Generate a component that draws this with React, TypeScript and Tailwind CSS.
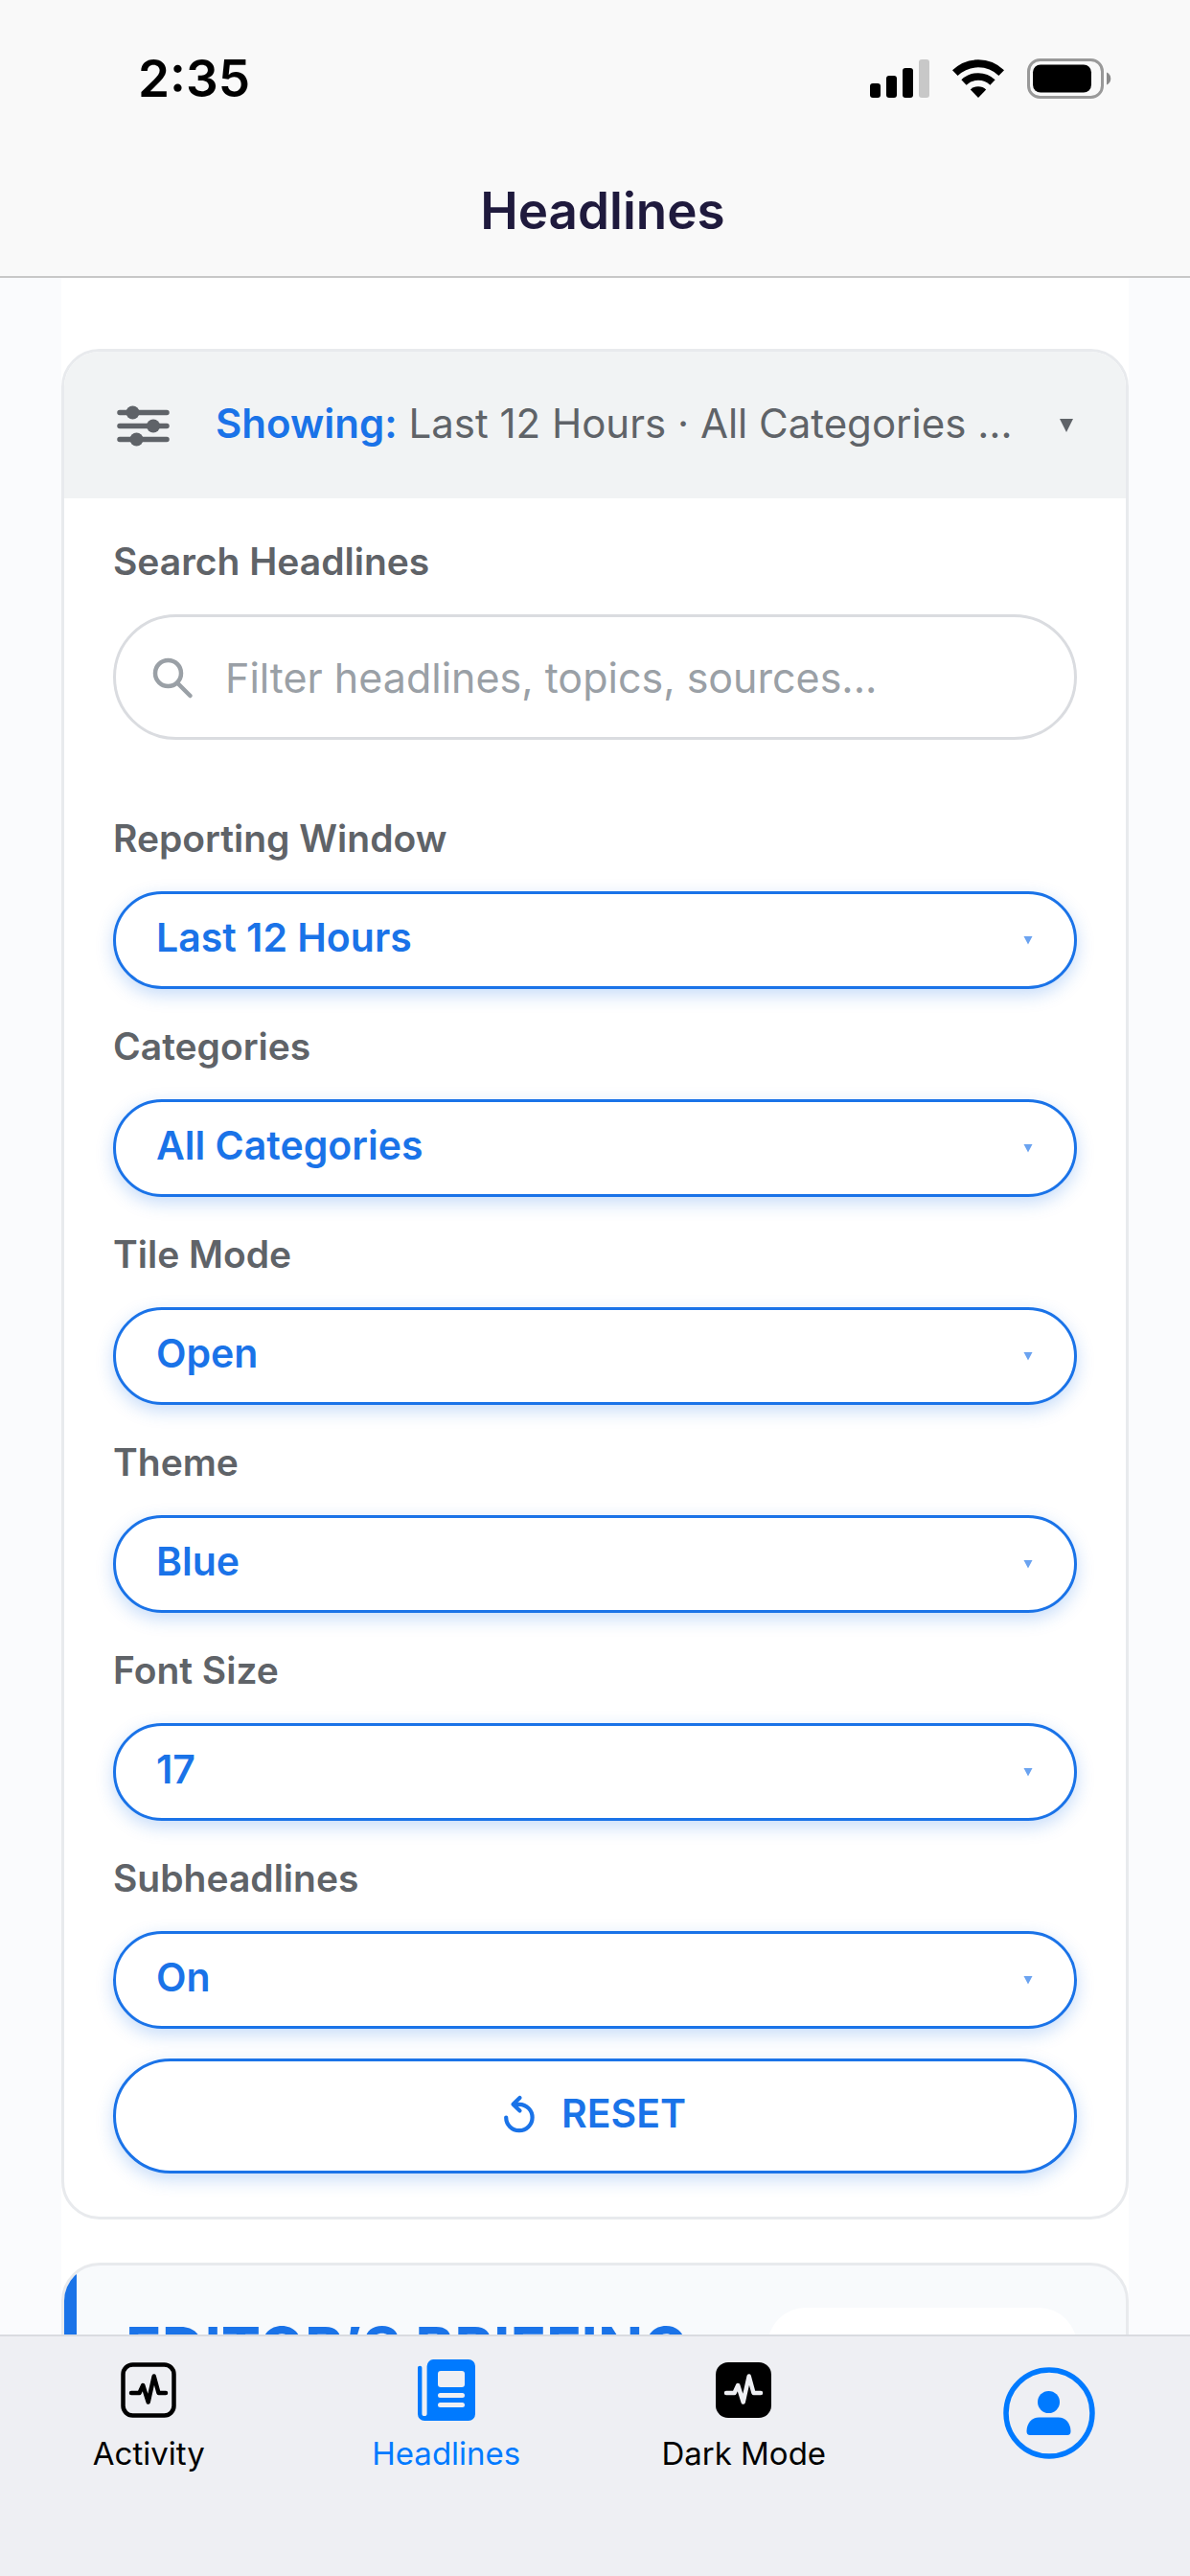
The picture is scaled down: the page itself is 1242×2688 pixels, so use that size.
import React, { useState } from 'react';

interface FilterField {
  id: string;
  label: string;
  options: string[];
}

const FILTERS: FilterField[] = [
  { id: 'window', label: 'Reporting Window', options: ['Last 12 Hours', 'Last 24 Hours', 'Last 48 Hours'] },
  { id: 'categories', label: 'Categories', options: ['All Categories', 'World', 'Business', 'Technology'] },
  { id: 'tile-mode', label: 'Tile Mode', options: ['Open', 'Closed'] },
  { id: 'theme', label: 'Theme', options: ['Blue', 'Green', 'Gray'] },
  { id: 'font-size', label: 'Font Size', options: ['17', '15', '19'] },
  { id: 'subheadlines', label: 'Subheadlines', options: ['On', 'Off'] },
];

const DEFAULTS: Record<string, string> = Object.fromEntries(FILTERS.map((f) => [f.id, f.options[0]]));

function SignalIcon() {
  return (
    <svg className="w-[62px] h-10" viewBox="0 0 62 40" aria-hidden="true">
      <rect x="0" y="25" width="11" height="15" rx="3" />
      <rect x="17" y="17" width="11" height="23" rx="3" />
      <rect x="34" y="9" width="11" height="31" rx="3" />
      <rect x="51" y="0" width="11" height="40" rx="3" fill="#c8c8c8" />
    </svg>
  );
}

function WifiIcon() {
  return (
    <svg className="w-[54px] h-10" viewBox="0 0 54 40" fill="none" stroke="#000" aria-hidden="true">
      <path d="M2.8 14.2a34.5 34.5 0 0 1 48.4 0" strokeWidth="8" />
      <path d="M12 24a21.5 21.5 0 0 1 30 0" strokeWidth="7.5" />
      <path d="M27 40l-8.2-8.6a12 12 0 0 1 16.4 0z" fill="#000" stroke="none" />
    </svg>
  );
}

function BatteryIcon() {
  return (
    <svg className="w-[88px] h-[42px]" viewBox="0 0 88 42" aria-hidden="true">
      <rect x="1.5" y="1.5" width="77" height="39" rx="12" fill="none" stroke="#999" strokeWidth="3" />
      <rect x="6" y="6.5" width="61" height="29" rx="8" />
      <path d="M83 14.5c2.6 1 4.3 3.5 4.3 6.5s-1.7 5.5-4.3 6.5z" fill="#8a8a8a" />
    </svg>
  );
}

function TuneIcon() {
  return (
    <svg className="w-14 h-14 shrink-0" viewBox="0 0 56 56" fill="#5f6368" stroke="#5f6368" strokeWidth="5.5" strokeLinecap="round" aria-hidden="true">
      <path d="M4 14.5h49M4 28.5h49M4 42.5h49" />
      <circle cx="17.5" cy="14.5" r="7" stroke="none" />
      <circle cx="39" cy="28.5" r="7" stroke="none" />
      <circle cx="21.5" cy="42.5" r="7" stroke="none" />
    </svg>
  );
}

function SearchIcon() {
  return (
    <svg className="w-12 h-12" viewBox="0 0 48 48" fill="none" stroke="#9aa0a6" strokeWidth="4.5" strokeLinecap="round" aria-hidden="true">
      <circle cx="19.5" cy="19.5" r="13.5" />
      <path d="M29.5 30L42.5 43" />
    </svg>
  );
}

function ResetIcon() {
  return (
    <svg className="w-8 h-10" viewBox="0 0 32 40" fill="none" stroke="currentColor" strokeWidth="4.2" strokeLinecap="round" strokeLinejoin="round" aria-hidden="true">
      <path d="M2.2 23.5a13.7 13.7 0 1 0 13.8-13.7h-5.5" />
      <path d="M16.5 3l-7 6.8 7 6.8" />
    </svg>
  );
}

const PULSE = 'M13 35h8.5l3.7-8 5.5 17.5 6-27 4.8 17.5H49';

function ActivityIcon() {
  return (
    <svg className="w-[62px] h-16" viewBox="0 0 62 64" fill="none" stroke="#000" strokeWidth="4.5" strokeLinecap="round" strokeLinejoin="round" aria-hidden="true">
      <rect x="4.5" y="5.5" width="53" height="53" rx="10" />
      <path d={PULSE} />
    </svg>
  );
}

function DarkModeIcon() {
  return (
    <svg className="w-[62px] h-16" viewBox="0 0 62 64" fill="none" stroke="#eeeff3" strokeWidth="4.5" strokeLinecap="round" strokeLinejoin="round" aria-hidden="true">
      <rect x="2" y="3" width="58" height="58" rx="13" fill="#000" stroke="none" />
      <path d={PULSE} />
    </svg>
  );
}

function NewsIcon() {
  return (
    <svg className="w-[62px] h-16" viewBox="0 0 62 64" fill="#007aff" aria-hidden="true">
      <path d="M18 0h36a7 7 0 0 1 7 7v50a7 7 0 0 1-7 7H8a7 7 0 0 1-7-7V9c0-1.4.8-2.3 2.2-2.3S5.4 7.6 5.4 9v47.5a2.6 2.6 0 0 0 5.2 0V7a7 7 0 0 1 7.4-7z" />
      <rect x="22" y="12" width="28" height="17" rx="3" fill="#eeeff3" />
      <rect x="22" y="35" width="28" height="5" rx="2.5" fill="#eeeff3" />
      <rect x="22" y="45" width="28" height="5" rx="2.5" fill="#eeeff3" />
    </svg>
  );
}

function ProfileIcon() {
  return (
    <svg className="w-24 h-24" viewBox="0 0 96 96" fill="#007aff" aria-hidden="true">
      <circle cx="48" cy="48" r="45" fill="none" stroke="#007aff" strokeWidth="5.5" />
      <circle cx="47.5" cy="36.5" r="11.5" />
      <path d="M37.5 52.5h20c7.5 0 13 6 13 14.5 0 2.6-1.2 4-3.5 4H28c-2.3 0-3.5-1.4-3.5-4 0-8.5 5.5-14.5 13-14.5z" />
    </svg>
  );
}

export default function App() {
  const [query, setQuery] = useState('');
  const [values, setValues] = useState(DEFAULTS);
  const [open, setOpen] = useState(true);

  const handleReset = () => {
    setQuery('');
    setValues(DEFAULTS);
  };

  return (
    <div className="h-screen flex flex-col bg-[#fafbfd] font-['Inter','Liberation_Sans',sans-serif]">
      <header className="shrink-0 bg-[#f9f9f9] border-b-2 border-[#c8c8c8]">
        <div className="flex items-center justify-between pt-12 pl-36 pr-[82px]">
          <span className="text-[53px] leading-[68px] font-semibold text-black">2:35</span>
          <div className="flex items-center gap-6">
            <SignalIcon />
            <WifiIcon />
            <BatteryIcon />
          </div>
        </div>
        <h1 className="pt-[70px] pb-[34px] pl-4 text-center text-[53px] leading-[68px] font-semibold text-[#1f1a3d]">Headlines</h1>
      </header>

      <main className="flex-1 min-h-0 overflow-y-auto [scrollbar-width:none] px-16">
        <div className="bg-white pt-[74px] space-y-[45px]">
          <section className="border-[3px] border-[#e8eaed] rounded-[40px] overflow-hidden">
            <button
              type="button"
              aria-expanded={open}
              onClick={() => setOpen(!open)}
              className="w-full flex items-center bg-[#f1f3f4] h-[153px] px-[54px] text-left cursor-pointer"
            >
              <TuneIcon />
              <span className="flex-1 min-w-0 mx-12 pb-1 whitespace-nowrap text-[42px] leading-[56px] text-[#5f6368]">
                <strong className="font-semibold text-[#1a73e8]">Showing:</strong> {values.window} · {values.categories} …
              </span>
              <svg className="w-4 h-4 shrink-0" viewBox="0 0 16 16" fill="#5f6368" aria-hidden="true">
                <path d="M1 1h14L8 15z" />
              </svg>
            </button>

            {open && (
              <div className="px-[51px] pt-[41px] pb-[45px]">
                <label htmlFor="search" className="block text-[39px] leading-[50px] font-semibold text-[#5f6368]">
                  Search Headlines
                </label>
                <div className="relative mt-[30px]">
                  <span className="absolute left-[38px] inset-y-0 flex items-center">
                    <SearchIcon />
                  </span>
                  <input
                    id="search"
                    type="text"
                    value={query}
                    onChange={(e) => setQuery(e.target.value)}
                    placeholder="Filter headlines, topics, sources..."
                    className="block w-full h-[131px] pl-[114px] pr-12 rounded-full border-[3px] border-[#dadce0] bg-white text-[43px] text-[#202124] placeholder:text-[#9aa0a6] focus:outline-hidden"
                  />
                </div>

                <div className="mt-[78px] space-y-[35px]">
                  {FILTERS.map((field) => (
                    <div key={field.id}>
                      <label htmlFor={field.id} className="block text-[39px] leading-[50px] font-semibold text-[#5f6368]">
                        {field.label}
                      </label>
                      <div className="relative mt-[30px]">
                        <select
                          id={field.id}
                          value={values[field.id]}
                          onChange={(e) => setValues({ ...values, [field.id]: e.target.value })}
                          className="block w-full h-[102px] pl-[42px] pr-24 pb-1 appearance-none rounded-full border-[3px] border-[#1a73e8] bg-white text-[41px] font-semibold text-[#1a73e8] shadow-[0_6px_18px_rgba(26,115,232,0.25)] cursor-pointer focus:outline-hidden"
                        >
                          {field.options.map((option) => (
                            <option key={option}>{option}</option>
                          ))}
                        </select>
                        <span className="absolute right-[46px] inset-y-0 flex items-center pointer-events-none">
                          <svg className="w-2.5 h-2.5" viewBox="0 0 10 10" fill="#6ba3f0" aria-hidden="true">
                            <path d="M0.5 1h9L5 9.5z" />
                          </svg>
                        </span>
                      </div>
                    </div>
                  ))}
                </div>

                <button
                  type="button"
                  onClick={handleReset}
                  className="mt-[31px] w-full h-[120px] pb-1 flex items-center justify-center gap-7 rounded-full border-[3px] border-[#1a73e8] bg-white text-[41px] font-semibold text-[#1a73e8] shadow-[0_6px_18px_rgba(26,115,232,0.25)] cursor-pointer"
                >
                  <ResetIcon />
                  <span>RESET</span>
                </button>
              </div>
            )}
          </section>

          <section className="border-[3px] border-[#e8eaed] rounded-[40px] overflow-hidden bg-[#f8fafc]">
            <div className="flex items-start justify-between border-l-[13px] border-[#1a73e8] pt-11 pb-12 pl-[51px] pr-[51px]">
              <h2 className="pt-[9px] text-[62px] leading-[68px] font-bold whitespace-nowrap text-[#1a73e8]">EDITOR’S BRIEFING</h2>
              <button type="button" className="rounded-[40px] bg-white px-10 py-[18px] text-[36px] leading-[50px] whitespace-nowrap text-[#5f6368] cursor-pointer">
                Open full brief
              </button>
            </div>
          </section>
        </div>
      </main>

      <nav className="shrink-0 h-[252px] grid grid-cols-4 items-start border-t-2 border-[#d9dbe0] bg-[#eeeff3] pt-6 text-[33px] leading-10 text-black">
        <a href="#activity" className="flex flex-col items-center gap-[14px]">
          <ActivityIcon />
          <span>Activity</span>
        </a>
        <a href="#headlines" className="flex flex-col items-center gap-[14px] text-[#007aff]">
          <NewsIcon />
          <span>Headlines</span>
        </a>
        <a href="#dark-mode" className="flex flex-col items-center gap-[14px]">
          <DarkModeIcon />
          <span>Dark Mode</span>
        </a>
        <a href="#profile" aria-label="Profile" className="flex justify-center pt-2 pl-4">
          <ProfileIcon />
        </a>
      </nav>
    </div>
  );
}
